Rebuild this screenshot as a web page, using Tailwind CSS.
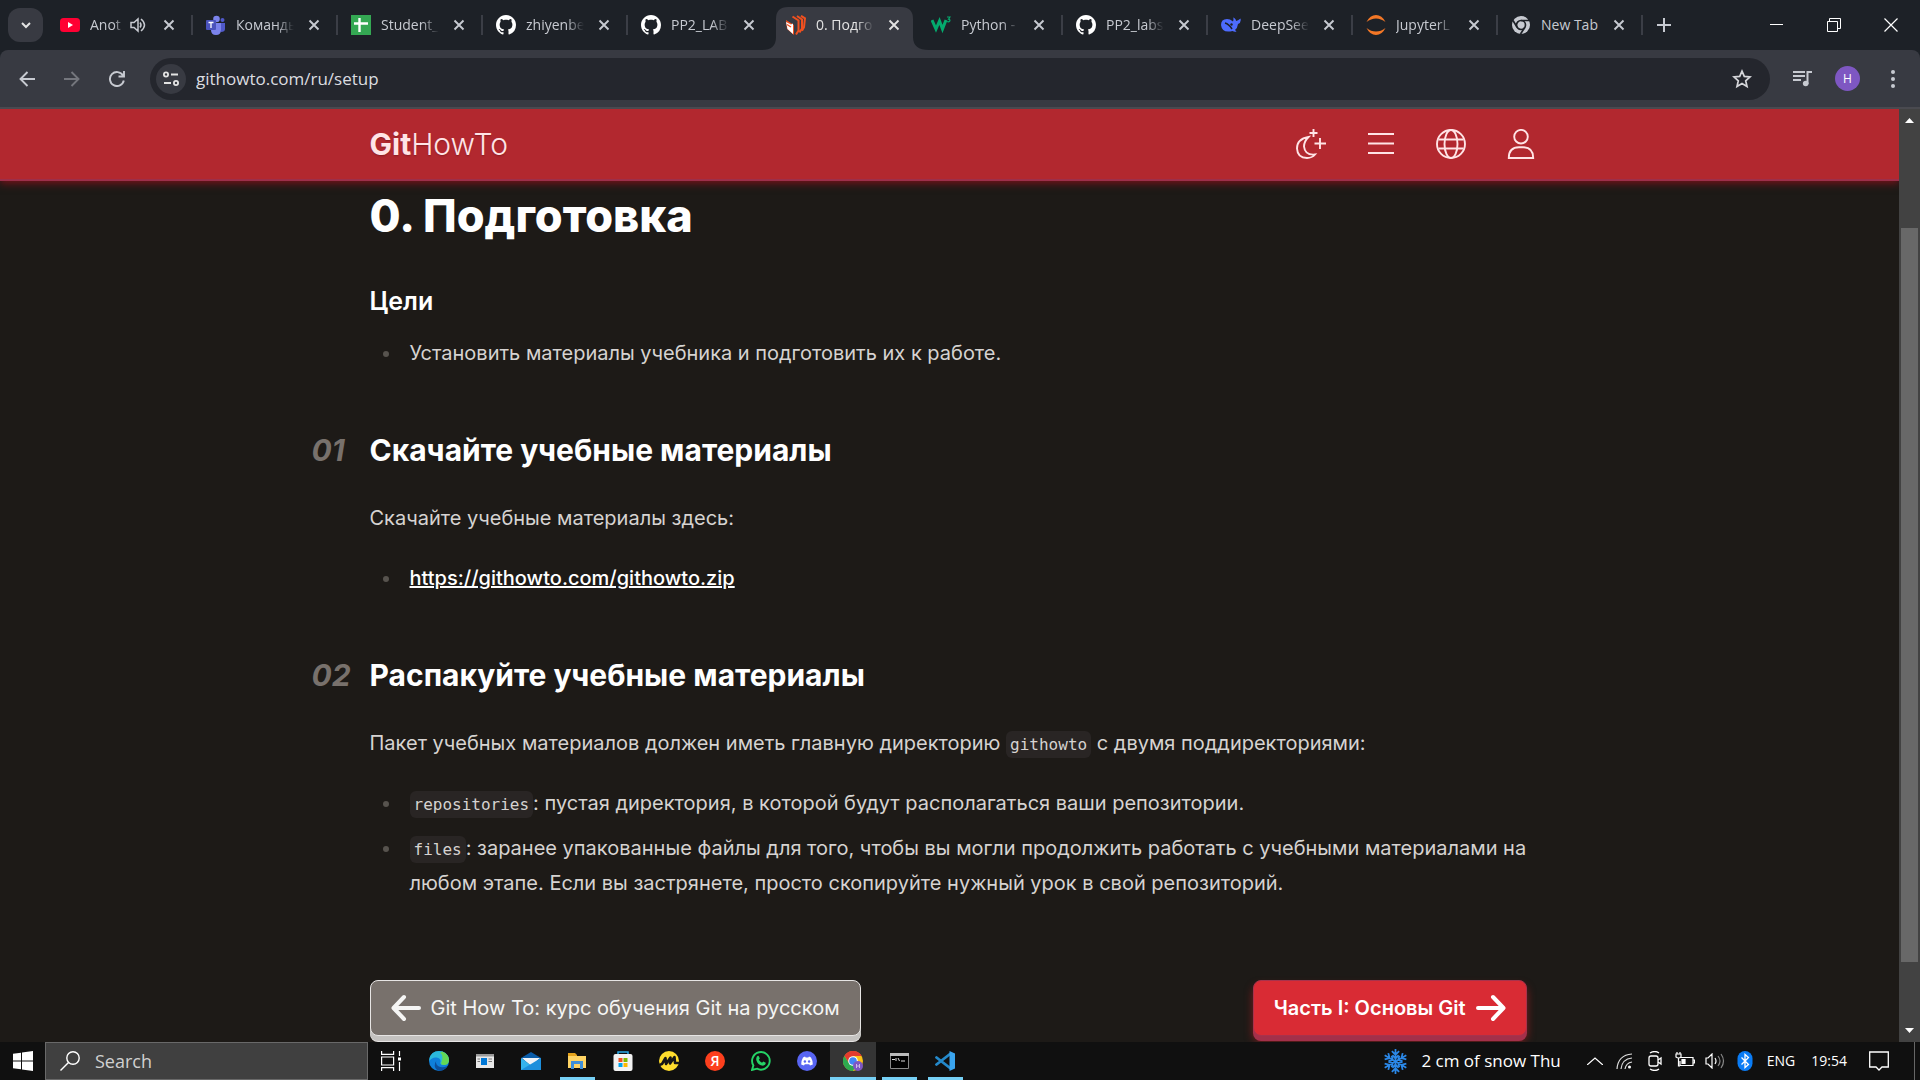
<!DOCTYPE html>
<html lang="ru">
<head>
<meta charset="utf-8">
<title>0. Подготовка</title>
<script src="https://cdn.jsdelivr.net/npm/@tailwindcss/browser@4"></script>
</head>
<body class="h-screen overflow-hidden flex flex-col bg-[#1d1a17] font-['Open_Sans',sans-serif]">
<svg class="hidden">
  <symbol id="x" viewBox="0 0 12 12"><path d="M1.5 1.5l9 9M10.500 1.500l-9 9" stroke="currentColor" stroke-width="1.9" fill="none"/></symbol>
  <symbol id="github" viewBox="0 0 16 16"><path fill="#fff" d="M8 0C3.580 0 0 3.580 0 8c0 3.540 2.290 6.530 5.470 7.590.4.070.55-.17.55-.38 0-.19-.01-.82-.01-1.490-2.010.37-2.530-.49-2.690-.94-.09-.23-.48-.94-.82-1.130-.28-.15-.68-.52-.01-.53.63-.01 1.080.58 1.230.82.72 1.210 1.870.87 2.330.66.070-.52.28-.87.51-1.070-1.780-.2-3.640-.89-3.640-3.950 0-.87.31-1.590.82-2.150-.08-.2-.36-1.020.08-2.120 0 0 .67-.21 2.200.82.64-.18 1.320-.27 2-.27s1.360.09 2 .27c1.530-1.040 2.200-.82 2.200-.82.44 1.100.16 1.920.08 2.120.51.56.82 1.270.82 2.150 0 3.070-1.870 3.750-3.650 3.950.29.25.54.73.54 1.480 0 1.070-.01 1.930-.01 2.200 0 .21.15.46.55.38A8 8 0 0 0 16 8c0-4.420-3.580-8-8-8z"/></symbol>
</svg>

<!-- Browser tabs -->
<header class="shrink-0 h-[50px] bg-[#1d2127] flex items-center pl-2 text-[#c7cad1] text-sm">
  <button aria-label="Search tabs" class="w-[35px] h-[34px] rounded-xl bg-[#383a42] grid place-items-center mr-[5px]"><svg class="w-3 h-3" viewBox="0 0 12 12"><path d="M2 4l4 4 4-4" stroke="#e3e3e3" stroke-width="2" fill="none"/></svg></button>
  <div class="w-[145px] h-[50px] flex items-center pl-3 relative">
    <svg class="w-5 h-5 shrink-0" viewBox="0 0 20 20"><rect y="3" width="20" height="14" rx="3.500" fill="#ff0033"/><path d="M8 7l5 3-5 3z" fill="#fff"/></svg>
    <span class="ml-[10px] w-[34px] overflow-hidden whitespace-nowrap mask-r-from-70%">Anot</span>
    <svg class="w-4 h-4 ml-1.5" viewBox="0 0 16 16" fill="none" stroke="#c7cad1" stroke-width="1.500"><path d="M1 5.500v5h3l4 3.500V2L4 5.500zM10 5.500q2 2.500 0 5M11 2q7 6 0 12"/></svg>
    <button aria-label="Close tab" class="ml-auto mr-[18px]"><svg class="w-3 h-3"><use href="#x"/></svg></button>
    <i class="absolute right-0 w-0.5 h-5 bg-[#3b3e46]"></i>
  </div>
  <div class="w-[145px] h-[50px] flex items-center pl-[13px] relative">
    <svg class="w-5 h-5 shrink-0" viewBox="0 0 20 20"><circle cx="10.500" cy="4" r="3.300" fill="#7b83eb"/><circle cx="16.500" cy="5" r="2" fill="#5059c9"/><path d="M13 8h6v6q0 3-4 3z" fill="#5059c9"/><path d="M6 8h9v7q0 5-5 5t-5-5z" fill="#7b83eb"/><rect y="5" width="10" height="10" rx="1" fill="#4b53bc"/><path d="M2.500 7.500h5M5 7.500v5.500" stroke="#fff" stroke-width="1.300"/></svg>
    <span class="ml-[10px] w-[58px] overflow-hidden whitespace-nowrap mask-r-from-70%">Команды</span>
    <button aria-label="Close tab" class="ml-auto mr-[18px]"><svg class="w-3 h-3"><use href="#x"/></svg></button>
    <i class="absolute right-0 w-0.5 h-5 bg-[#3b3e46]"></i>
  </div>
  <div class="w-[145px] h-[50px] flex items-center pl-[13px] relative">
    <svg class="w-5 h-5 shrink-0" viewBox="0 0 20 20"><rect y="-2" width="20" height="24" rx="2" fill="#34a853"/><path d="M8.500 3v14M3 8.500h14" stroke="#fff" stroke-width="2.400"/></svg>
    <span class="ml-[10px] w-[58px] overflow-hidden whitespace-nowrap mask-r-from-70%">Student_</span>
    <button aria-label="Close tab" class="ml-auto mr-[18px]"><svg class="w-3 h-3"><use href="#x"/></svg></button>
    <i class="absolute right-0 w-0.5 h-5 bg-[#3b3e46]"></i>
  </div>
  <div class="w-[145px] h-[50px] flex items-center pl-[13px] relative">
    <svg class="w-5 h-5 shrink-0"><use href="#github"/></svg>
    <span class="ml-[10px] w-[58px] overflow-hidden whitespace-nowrap mask-r-from-70%">zhiyenbe</span>
    <button aria-label="Close tab" class="ml-auto mr-[18px]"><svg class="w-3 h-3"><use href="#x"/></svg></button>
    <i class="absolute right-0 w-0.5 h-5 bg-[#3b3e46]"></i>
  </div>
  <div class="w-[145px] h-[50px] flex items-center pl-[13px] relative">
    <svg class="w-5 h-5 shrink-0"><use href="#github"/></svg>
    <span class="ml-[10px] w-[58px] overflow-hidden whitespace-nowrap mask-r-from-70%">PP2_LAB</span>
    <button aria-label="Close tab" class="ml-auto mr-[18px]"><svg class="w-3 h-3"><use href="#x"/></svg></button>
  </div>
  <div class="w-[145px] h-[50px] flex items-center pl-[13px] relative text-[#e3e3e3]">
    <svg class="absolute -left-[11px] top-[7px] w-[167px] h-[43px]" viewBox="0 0 167 43"><path fill="#383a42" d="M0 43q14 0 14-13V12Q14 0 26 0h113q12 0 12 12v18q0 13 16 13z"/></svg>
    <svg class="w-5 h-5 shrink-0 relative" viewBox="0 0 20 20"><path d="M6.500 1.500l6 4v10l-2.500 4M11 1l5 3.500v9l-2.500 4M15 .8l4 2.500-1 9-2 3.500" stroke="#f0501f" stroke-width="2" fill="none"/><path fill="#f0501f" d="M0 5l8 5v10l-7-6z"/><path fill="#fff" d="M0 7l5 2.500 2-1V19L1.500 14z"/><path d="M1 9.500l4 2.500" stroke="#f0501f" stroke-width="1.400"/></svg>
    <span class="ml-[10px] w-[58px] overflow-hidden whitespace-nowrap mask-r-from-70% relative">0. Подго</span>
    <button aria-label="Close tab" class="ml-auto mr-[18px] relative"><svg class="w-3 h-3"><use href="#x"/></svg></button>
  </div>
  <div class="w-[145px] h-[50px] flex items-center pl-[13px] relative">
    <svg class="w-5 h-5 shrink-0" viewBox="0 0 20 20" fill="none" stroke="#04aa6d"><path stroke-width="3" d="M1 5l4 9 3.500-8 3 8L15 5"/><path stroke-width="1.200" d="M16 2h3l-1.500 2.200q2 .3 1.200 2-1 1.200-2.700.3"/></svg>
    <span class="ml-[10px] w-[58px] overflow-hidden whitespace-nowrap mask-r-from-70%">Python -</span>
    <button aria-label="Close tab" class="ml-auto mr-[18px]"><svg class="w-3 h-3"><use href="#x"/></svg></button>
    <i class="absolute right-0 w-0.5 h-5 bg-[#3b3e46]"></i>
  </div>
  <div class="w-[145px] h-[50px] flex items-center pl-[13px] relative">
    <svg class="w-5 h-5 shrink-0"><use href="#github"/></svg>
    <span class="ml-[10px] w-[58px] overflow-hidden whitespace-nowrap mask-r-from-70%">PP2_labs</span>
    <button aria-label="Close tab" class="ml-auto mr-[18px]"><svg class="w-3 h-3"><use href="#x"/></svg></button>
    <i class="absolute right-0 w-0.5 h-5 bg-[#3b3e46]"></i>
  </div>
  <div class="w-[145px] h-[50px] flex items-center pl-[13px] relative">
    <svg class="w-5 h-5 shrink-0" viewBox="0 0 20 20"><path fill="#4d6bfe" d="M0 10q0-6 6-6l3 .5 3 2q1-3 0-4 3 1 3 3.500 2-.5 4.500-2.500 1 4-2.500 5.500-.5 4-3 6l1.500 1.500q-2 .8-4-.5Q1 18.500 0 10z"/><path d="M4 8q4 1 7 6" stroke="#1d2127" stroke-width="1.500" fill="none"/><circle cx="10.500" cy="9.500" r="1.200" fill="#1d2127"/></svg>
    <span class="ml-[10px] w-[58px] overflow-hidden whitespace-nowrap mask-r-from-70%">DeepSee</span>
    <button aria-label="Close tab" class="ml-auto mr-[18px]"><svg class="w-3 h-3"><use href="#x"/></svg></button>
    <i class="absolute right-0 w-0.5 h-5 bg-[#3b3e46]"></i>
  </div>
  <div class="w-[145px] h-[50px] flex items-center pl-[13px] relative">
    <svg class="w-5 h-5 shrink-0" viewBox="0 0 20 20" fill="#f37726"><path d="M.5 7Q4 0 10 0t9.500 7Q15 3.500 10 3.500T.5 7zM.5 13Q4 20 10 20t9.500-7Q15 16.500 10 16.500T.5 13z"/></svg>
    <span class="ml-[10px] w-[58px] overflow-hidden whitespace-nowrap mask-r-from-70%">JupyterL</span>
    <button aria-label="Close tab" class="ml-auto mr-[18px]"><svg class="w-3 h-3"><use href="#x"/></svg></button>
    <i class="absolute right-0 w-0.5 h-5 bg-[#3b3e46]"></i>
  </div>
  <div class="w-[145px] h-[50px] flex items-center pl-[13px] relative">
    <svg class="w-5 h-5 shrink-0" viewBox="0 0 20 20" fill="none"><circle cx="10" cy="10" r="9" fill="#c7cad1"/><circle cx="10" cy="10" r="4.500" stroke="#1d2127" stroke-width="1.700"/><path d="M10 5.500h8M6.100 12.200L2 5.500M13.900 12.200L9.500 19" stroke="#1d2127" stroke-width="1.700"/></svg>
    <span class="ml-[10px] whitespace-nowrap">New Tab</span>
    <button aria-label="Close tab" class="ml-auto mr-[18px]"><svg class="w-3 h-3"><use href="#x"/></svg></button>
    <i class="absolute right-0 w-0.5 h-5 bg-[#3b3e46]"></i>
  </div>
  <button aria-label="New tab" class="ml-3.5"><svg class="w-3.5 h-3.5" viewBox="0 0 14 14"><path d="M7 0v14M0 7h14" stroke="#c7cad1" stroke-width="2"/></svg></button>
  <div class="ml-auto flex text-white">
    <button aria-label="Minimize" class="w-[57px] h-12 grid place-items-center"><svg class="w-3.5 h-3.5" viewBox="0 0 14 14"><path d="M0 6.500h13" stroke="currentColor"/></svg></button>
    <button aria-label="Restore" class="w-[57px] h-12 grid place-items-center"><svg class="w-3.5 h-3.5" viewBox="0 0 14 14" fill="none" stroke="currentColor"><path d="M.5 3.500h10v10H.5zM2.500 3V.5h11v10H11"/></svg></button>
    <button aria-label="Close window" class="w-[58px] h-12 grid place-items-center"><svg class="w-3.5 h-3.5" viewBox="0 0 14 14"><path d="M.5 .5l13 13M13.500 .5l-13 13" stroke="currentColor" stroke-width="1.200"/></svg></button>
  </div>
</header>

<!-- Browser toolbar -->
<div class="shrink-0 bg-[#1d2127]">
<nav class="h-[59px] bg-[#383a42] border-b-2 border-[#4a4a50] rounded-t-lg flex items-center pl-3 pr-4 text-[#c7cad1]">
  <button aria-label="Back" class="w-[30px] grid place-items-center"><svg class="w-4 h-4" viewBox="0 0 16 16" fill="none" stroke="currentColor" stroke-width="1.900"><path d="M16 8H1.500M8.500 1L1.500 8l7 7"/></svg></button>
  <button aria-label="Forward" disabled class="w-[30px] ml-[15px] grid place-items-center text-[#74767d]"><svg class="w-4 h-4" viewBox="0 0 16 16" fill="none" stroke="currentColor" stroke-width="1.900"><path d="M0 8h14.500M7.500 1l7 7-7 7"/></svg></button>
  <button aria-label="Reload" class="w-[30px] ml-[15px] grid place-items-center"><svg class="w-4 h-4" viewBox="0 0 16 16" fill="none" stroke="currentColor" stroke-width="1.900"><path d="M14 4.500A7 7 0 1 0 14.800 9.500M15 0v5.500H9.500"/></svg></button>
  <div class="flex-1 ml-[18px] h-[42px] rounded-full bg-[#24262d] flex items-center px-[6px]">
    <button aria-label="Site information" class="w-[30px] h-[30px] rounded-full bg-[#383a42] grid place-items-center"><svg class="w-4 h-4" viewBox="0 0 16 16" fill="none" stroke="#e3e3e3" stroke-width="1.800"><circle cx="3" cy="3.500" r="2.100"/><path d="M8 3.500h7M1 12h7"/><circle cx="13" cy="12" r="2.100"/></svg></button>
    <input aria-label="Address" value="githowto.com/ru/setup" class="flex-1 ml-[10px] text-[17px] text-[#dcdde0] bg-transparent outline-none">
    <button aria-label="Bookmark" class="mr-3"><svg class="w-5 h-5" viewBox="0 0 20 20" fill="none" stroke="#d5d6da" stroke-width="1.700"><path d="M10 2.200l2.300 5.200 5.700.6-4.300 3.800 1.300 5.600-5-3-5 3 1.300-5.600L2 8l5.700-.6z"/></svg></button>
  </div>
  <button aria-label="Media controls" class="ml-[23px]"><svg class="w-5 h-5" viewBox="0 0 20 20"><path d="M0 3h12M0 7h12M0 11h8M14.500 15V3H19" stroke="currentColor" stroke-width="2" fill="none"/><circle cx="12.700" cy="14.500" r="2.800" fill="currentColor"/></svg></button>
  <button aria-label="Profile" class="ml-[22px] w-[25px] h-[25px] rounded-full bg-[#7e57c2] text-white text-xs">H</button>
  <button aria-label="Menu" class="ml-[22px] w-[22px] grid place-items-center"><svg class="w-5 h-5" viewBox="0 0 20 20" fill="currentColor"><circle cx="10" cy="3" r="2"/><circle cx="10" cy="10" r="2"/><circle cx="10" cy="17" r="2"/></svg></button>
</nav>
</div>

<!-- Page viewport -->
<div class="flex-1 min-h-0 flex">
  <div class="flex-1 min-w-0 overflow-hidden font-['Inter',sans-serif] text-xl leading-[35px] text-[#d6d3d1]">
    <header class="relative h-[72px] bg-[#b2282f] border-b-2 border-[#9c2f4a] shadow-[0_2px_8px_#7f1119] text-[#ffe4e6]">
      <div class="max-w-[1160px] h-full mx-auto flex items-center">
        <a href="#" class="text-[30px] text-shadow-sm"><b class="font-bold">Git</b><span class="font-light">HowTo</span></a>
        <div class="ml-auto -mr-1.5 flex gap-10">
          <button aria-label="Theme"><svg class="w-[30px] h-[30px]" viewBox="0 0 30 30" fill="none" stroke="currentColor" stroke-width="1.900"><path d="M12.500 8Q1 10 1 19.500 1.500 29 11 29q5 0 8-3.500-10 1-11-8 0-5 4.500-9.500zM17.500 0v8M13.500 4h8M24 9v11M18.500 14.500H30"/></svg></button>
          <button aria-label="Contents"><svg class="w-[30px] h-[30px]" viewBox="0 0 30 30" fill="none" stroke="currentColor" stroke-width="2"><path d="M2 5h26M2 14.500h26M2 24h26"/></svg></button>
          <button aria-label="Language"><svg class="w-[30px] h-[30px]" viewBox="0 0 30 30" fill="none" stroke="currentColor" stroke-width="1.900"><circle cx="15" cy="15" r="14"/><ellipse cx="15" cy="15" rx="6.500" ry="14"/><path d="M2.500 10.500h25M2.500 19.500h25"/></svg></button>
          <button aria-label="Account"><svg class="w-[30px] h-[30px]" viewBox="0 0 30 30" fill="none" stroke="currentColor" stroke-width="1.900"><circle cx="15" cy="7.700" r="6.800"/><path d="M2.800 29Q2.800 18.300 13 18.300h4q10.200 0 10.200 10.700z"/></svg></button>
        </div>
      </div>
    </header>
    <main class="max-w-[1160px] mx-auto pt-[10px]">
      <h1 class="text-[45px] leading-[50px] font-extrabold text-white">0. Подготовка</h1>
      <h3 class="mt-10 text-[25px] leading-10 font-semibold text-white">Цели</h3>
      <ul class="mt-[15px] pl-10"><li class="relative before:absolute before:-left-[27px] before:top-[15px] before:w-1.5 before:h-1.5 before:rounded-full before:bg-[#57534e]">Установить материалы учебника и подготовить их к работе.</li></ul>

      <h2 class="relative mt-[59px] text-[30px] leading-10 font-bold text-white"><span class="absolute right-full mr-[18px] w-10 italic font-bold text-[#78716c]">01</span>Скачайте учебные материалы</h2>
      <p class="mt-[31px]">Скачайте учебные материалы здесь:</p>
      <ul class="mt-[25px] pl-10"><li class="relative before:absolute before:-left-[27px] before:top-[15px] before:w-1.5 before:h-1.5 before:rounded-full before:bg-[#57534e]"><a href="#" class="font-medium text-white underline">https://githowto.com/githowto.zip</a></li></ul>

      <h2 class="relative mt-[59px] text-[30px] leading-10 font-bold text-white"><span class="absolute right-full mr-[18px] w-10 italic font-bold text-[#78716c]">02</span>Распакуйте учебные материалы</h2>
      <p class="mt-[31px]">Пакет учебных материалов должен иметь главную директорию <code class="font-['DejaVu_Sans_Mono',monospace] text-base px-1 py-1 rounded-md bg-[#292524]">githowto</code> с двумя поддиректориями:</p>
      <ul class="mt-[25px] pl-10 flex flex-col gap-[10px]">
        <li class="relative before:absolute before:-left-[27px] before:top-[15px] before:w-1.5 before:h-1.5 before:rounded-full before:bg-[#57534e]"><code class="font-['DejaVu_Sans_Mono',monospace] text-base px-1 py-1 rounded-md bg-[#292524]">repositories</code>: пустая директория, в которой будут располагаться ваши репозитории.</li>
        <li class="relative before:absolute before:-left-[27px] before:top-[15px] before:w-1.5 before:h-1.5 before:rounded-full before:bg-[#57534e]"><code class="font-['DejaVu_Sans_Mono',monospace] text-base px-1 py-1 rounded-md bg-[#292524]">files</code>: заранее упакованные файлы для того, чтобы вы могли продолжить работать с учебными материалами на любом этапе. Если вы застрянете, просто скопируйте нужный урок в свой репозиторий.</li>
      </ul>

      <div class="mt-[79px] pr-[3px] flex justify-between">
        <a href="#" class="h-14 px-5 flex items-center gap-[10px] rounded-lg border border-[#e7e5e4] bg-[#78716c] text-[#f5f5f4] shadow-[0_5px_0_#c4c2c0,0_6px_0_#e7e5e4]"><svg class="w-[30px] h-[30px]" viewBox="0 0 30 30" fill="none" stroke="currentColor" stroke-width="4" stroke-linecap="round" stroke-linejoin="round"><path d="M28 15H3M13 4L2.500 15 13 26"/></svg>Git How To: курс обучения Git на русском</a>
        <a href="#" class="h-14 px-5 flex items-center gap-[10px] rounded-lg border border-[#a8324c] bg-[#d92b34] text-white font-semibold shadow-[0_5px_0_#a3304a,0_6px_8px_#7f1d1d]">Часть I: Основы Git<svg class="w-[30px] h-[30px]" viewBox="0 0 30 30" fill="none" stroke="currentColor" stroke-width="4" stroke-linecap="round" stroke-linejoin="round"><path d="M2 15h25M17 4l10.500 11L17 26"/></svg></a>
      </div>
    </main>
  </div>
  <div class="w-[21px] shrink-0 bg-[#424242] flex flex-col items-center justify-between py-[9px]">
    <svg class="w-[9px] h-[5px]" viewBox="0 0 9 5"><path d="M4.500 0L9 5H0z" fill="#fff"/></svg>
    <div class="w-[17px] mt-[105px] mb-[66px] flex-1 bg-[#686868]"></div>
    <svg class="w-[9px] h-[5px]" viewBox="0 0 9 5"><path d="M4.500 5L9 0H0z" fill="#fff"/></svg>
  </div>
</div>

<!-- Taskbar -->
<footer class="shrink-0 h-[38px] bg-[#101010] flex items-center text-white">
  <button aria-label="Start" class="w-[45px] grid place-items-center"><svg class="w-5 h-5" viewBox="0 0 20 20" fill="#fff"><path d="M0 2.800l8-1.100V9.500H0zM9 1.500L20 0v9.500H9zM0 10.500h8v7.800l-8-1.100zM9 10.500h11V20L9 18.500z"/></svg></button>
  <label class="w-[323px] h-[38px] border border-[#696969] bg-[#404040] flex items-center pl-[14px]">
    <svg class="w-5 h-5" viewBox="0 0 20 20" fill="none" stroke="#fff" stroke-width="1.400"><circle cx="13" cy="7" r="6.200"/><path d="M8.500 11.500L.5 19.500"/></svg>
    <input aria-label="Search" placeholder="Search" class="ml-[15px] w-60 bg-transparent text-lg placeholder:text-[#d0d0d0] outline-none">
  </label>
  <button aria-label="Task view" class="w-[46px] h-[38px] grid place-items-center"><svg class="w-5 h-5" viewBox="0 0 20 20" fill="none" stroke="#fff" stroke-width="1.200"><path d="M.6 0v3.400h12V0M.6 20v-3.400h12V20M.6 6h12v8H.6zM18.500 0v5M18.500 11v9"/><path d="M17 6.500h3v3h-3z" fill="#fff" stroke="none"/></svg></button>
  <button aria-label="Edge" class="w-[46px] h-[38px] grid place-items-center ml-[2px]"><svg class="w-5 h-5" viewBox="0 0 20 20"><circle cx="10" cy="10" r="10" fill="#0f7fdb"/><path d="M.3 8Q2 0 10 0t10 8q.3 6-5.500 6-4 0-3-3 .5-4-4-4.500Q3 6 .3 10z" fill="#2bb9dc"/><path d="M13 .5Q20 3 20 9q0 5.300-5.500 5-3.500-.5-2-3Q15 4 11 2z" fill="#63d955"/><path d="M8 8.500q-2.500 4 1 6.500 4 2.500 9.500 0Q14.500 21 9 19.500 3 16 8 8.500z" fill="#0c4f9c"/></svg></button>
  <button aria-label="App window" class="w-[46px] h-[38px] grid place-items-center"><svg class="w-[18px] h-3.5" viewBox="0 0 18 14"><path fill="#e8e8e8" d="M0 0h18v14H0z"/><path fill="#999" d="M0 0h18v2.500H0z"/><path fill="#0078d7" d="M5 4h6v7H5z"/><path d="M1.500 5h2.500M1.500 7.500h2.500M12.500 5H16M12.500 7.500H16" stroke="#777"/></svg></button>
  <button aria-label="Mail" class="w-[46px] h-[38px] grid place-items-center"><svg class="w-5 h-[18px]" viewBox="0 0 20 18"><path fill="#0a5ca8" d="M0 6l10-6 10 6v4H0z"/><path fill="#f0f4f8" d="M1 6h18l-9 8z"/><path fill="#35b4ee" d="M0 6l11 8 9-8v12H0z"/><path fill="#1d8fdc" d="M0 18L20 6v12z"/></svg></button>
  <button aria-label="Explorer" class="w-[46px] h-[38px] grid place-items-center relative"><svg class="w-5 h-[18px]" viewBox="0 0 20 18"><path fill="#e5a31c" d="M1 1h7l2 2v5H1z"/><path fill="#ffd464" d="M1 4h18v12H1z"/><path fill="#3f8fd8" d="M4 9h12v8h-3v-5H7v5H4z"/></svg><i class="absolute bottom-0 w-[35px] h-[3px] bg-[#76d0f5]"></i></button>
  <button aria-label="Store" class="w-[46px] h-[38px] grid place-items-center"><svg class="w-5 h-5" viewBox="0 0 20 20"><path d="M5 4V1h10v3" stroke="#29a9e8" fill="none" stroke-width="1.500"/><rect y="3" x=".5" width="19" height="17" rx="2" fill="#f3f3f3"/><path fill="#f25022" d="M5.500 7h4v4h-4z"/><path fill="#7fba00" d="M10.500 7h4v4h-4z"/><path fill="#00a4ef" d="M5.500 12h4v4h-4z"/><path fill="#ffb900" d="M10.500 12h4v4h-4z"/></svg></button>
  <button aria-label="Miro" class="w-[46px] h-[38px] grid place-items-center"><svg class="w-5 h-5" viewBox="0 0 20 20"><circle cx="10" cy="10" r="10" fill="#ffdd2d"/><path d="M0 14l3-1 3.500-6 .5 6 4.500-6.500-.5 6L15.500 6l.5 6h4" stroke="#161616" stroke-width="2.600" stroke-linejoin="round" fill="none"/></svg></button>
  <button aria-label="Yandex" class="w-[46px] h-[38px] grid place-items-center"><span class="w-5 h-5 rounded-full bg-[#fc3f1d] grid place-items-center text-sm leading-5 font-semibold">Я</span></button>
  <button aria-label="WhatsApp" class="w-[46px] h-[38px] grid place-items-center"><svg class="w-5 h-5" viewBox="0 0 20 20"><path d="M1 19l1.400-4.600A8.800 8.800 0 1 1 6 17.700z" fill="none" stroke="#25d366" stroke-width="1.900"/><path fill="#25d366" d="M6 5.500q1-1.500 2 0l.8 2-1 1.300q1.200 2 3.200 3l1.300-1.300 2.400 1.200q.5 2.500-2.700 3-5-.5-6.500-5-.8-2.500.5-4.200z"/></svg></button>
  <button aria-label="Discord" class="w-[46px] h-[38px] grid place-items-center"><svg class="w-5 h-5" viewBox="0 0 20 20"><circle cx="10" cy="10" r="10" fill="#5865f2"/><path fill="#fff" d="M6 6.500l2-1 .7 1h2.600l.7-1 2 1q2 3.500 1.800 7l-2.800 1-.8-1.300H7.800L7 14.500l-2.800-1Q4 10 6 6.500z"/><circle cx="7.900" cy="10.500" r="1.200" fill="#5865f2"/><circle cx="12.100" cy="10.500" r="1.200" fill="#5865f2"/></svg></button>
  <button aria-label="Chrome" class="w-[46px] h-[38px] grid place-items-center relative bg-[#353535]"><svg class="w-5 h-5" viewBox="0 0 20 20"><circle cx="10" cy="10" r="10" fill="#fbc116"/><path fill="#e33b2e" d="M1.300 5A10 10 0 0 1 18.700 5H10L6 12z"/><path fill="#2da94f" d="M1.300 5A10 10 0 0 0 10 20l4-7.500-8-.5z"/><circle cx="10" cy="10" r="4.800" fill="#fff"/><circle cx="10" cy="10" r="3.800" fill="#4285f4"/><circle cx="15" cy="15" r="5" fill="#7e57c2"/><path d="M13.500 13v4M16.500 13v4M13.500 15h3" stroke="#cdbbe8"/></svg><i class="absolute bottom-0 inset-x-0 h-[3px] bg-[#76d0f5]"></i></button>
  <button aria-label="Command prompt" class="w-[46px] h-[38px] grid place-items-center relative"><svg class="w-[19px] h-4" viewBox="0 0 19 16"><path d="M.5 .5h18v15H.5z" fill="#000" stroke="#888"/><path fill="#bbb" d="M0 0h19v3H0z"/><path d="M2 6.500h3M6 5v3M8 5l1.500 3M11 8h4" stroke="#ddd"/></svg><i class="absolute bottom-0 w-[35px] h-[3px] bg-[#76d0f5]"></i></button>
  <button aria-label="VS Code" class="w-[46px] h-[38px] grid place-items-center relative"><svg class="w-5 h-5" viewBox="0 0 20 20"><path d="M1.500 6.500L15 17M1.500 13.500L15 3" stroke="#2489ca" stroke-width="2.800" stroke-linecap="round"/><path fill="#3aa5f0" d="M14.500 0L20 2.500v15L14.500 20z"/></svg><i class="absolute bottom-0 w-[35px] h-[3px] bg-[#76d0f5]"></i></button>

  <div class="ml-auto h-full flex items-center pr-[5px]">
    <button class="flex items-center gap-[13px] text-[17px]"><svg class="w-[25px] h-[25px]" viewBox="0 0 24 24" fill="none" stroke="#2b88e8" stroke-width="1.700"><path id="arm" d="M12 0v24M8.500 2L12 5.500 15.500 2M8.500 22l3.500-3.500 3.500 3.500M9 6l3 3 3-3M9 18l3-3 3 3"/><use href="#arm" transform="rotate(60 12 12)"/><use href="#arm" transform="rotate(120 12 12)"/></svg>2 cm of snow Thu</button>
    <div class="ml-6 flex items-center gap-[10px]">
      <button aria-label="Hidden icons" class="w-5 grid place-items-center"><svg class="w-4 h-2" viewBox="0 0 16 8"><path d="M0 8l8-7 8 7" stroke="#fff" stroke-width="1.300" fill="none"/></svg></button>
      <svg class="w-5 h-4" viewBox="0 0 20 16" fill="none" stroke="#ddd" stroke-width="1.200"><path d="M2 16Q3 2 17 1M6 16Q7 6 17 5M10 16q1-6 7-7"/><circle cx="14.500" cy="14" r="1.500" fill="#fff" stroke="none"/></svg>
      <svg class="w-5 h-5" viewBox="0 0 20 20" fill="none" stroke="#fff" stroke-width="1.300"><rect x="4" y="5" width="9" height="10" rx="2"/><path d="M13 9l3-2v6l-3-2M5 2q5-3 9 0M5 18q5 3 9 0"/></svg>
      <svg class="w-5 h-5" viewBox="0 0 20 20" fill="none" stroke="#fff" stroke-width="1.200"><path d="M5 6.500h13v8H5V10M18 9h1.500v3H18M1 3h5v3q-2.500 2-5 0zM2 3V1M5 3V1M3.500 7v8H5"/><path fill="#fff" d="M7 8.500h3v4H7z"/></svg>
      <svg class="w-5 h-4" viewBox="0 0 20 16" fill="none" stroke="#fff" stroke-width="1.200"><path d="M1 5v6h2l4 4V1L3 5zM10 5q2 3 0 6"/><path stroke="#888" d="M13 3q4 5 0 10M16 1q5 7 0 14"/></svg>
      <svg class="w-5 h-5" viewBox="0 0 20 20"><rect x="2.500" width="15" height="20" rx="7.500" fill="#0a7cf5"/><path d="M6.500 6.500l7 7L10 16.500v-13l3.500 3-7 7" stroke="#fff" stroke-width="1.300" fill="none"/></svg>
    </div>
    <button class="ml-3 text-sm">ENG</button>
    <button class="ml-4 text-sm">19:54</button>
    <button aria-label="Notifications" class="ml-[22px]"><svg class="w-5 h-5" viewBox="0 0 20 20"><path d="M.7 1h18.600v15H13l-3 3-3-3H.7z" stroke="#fff" stroke-width="1.300" fill="none"/></svg></button>
    <i class="ml-[25px] w-px h-full bg-[#666]"></i>
  </div>
</footer>
</body>
</html>
